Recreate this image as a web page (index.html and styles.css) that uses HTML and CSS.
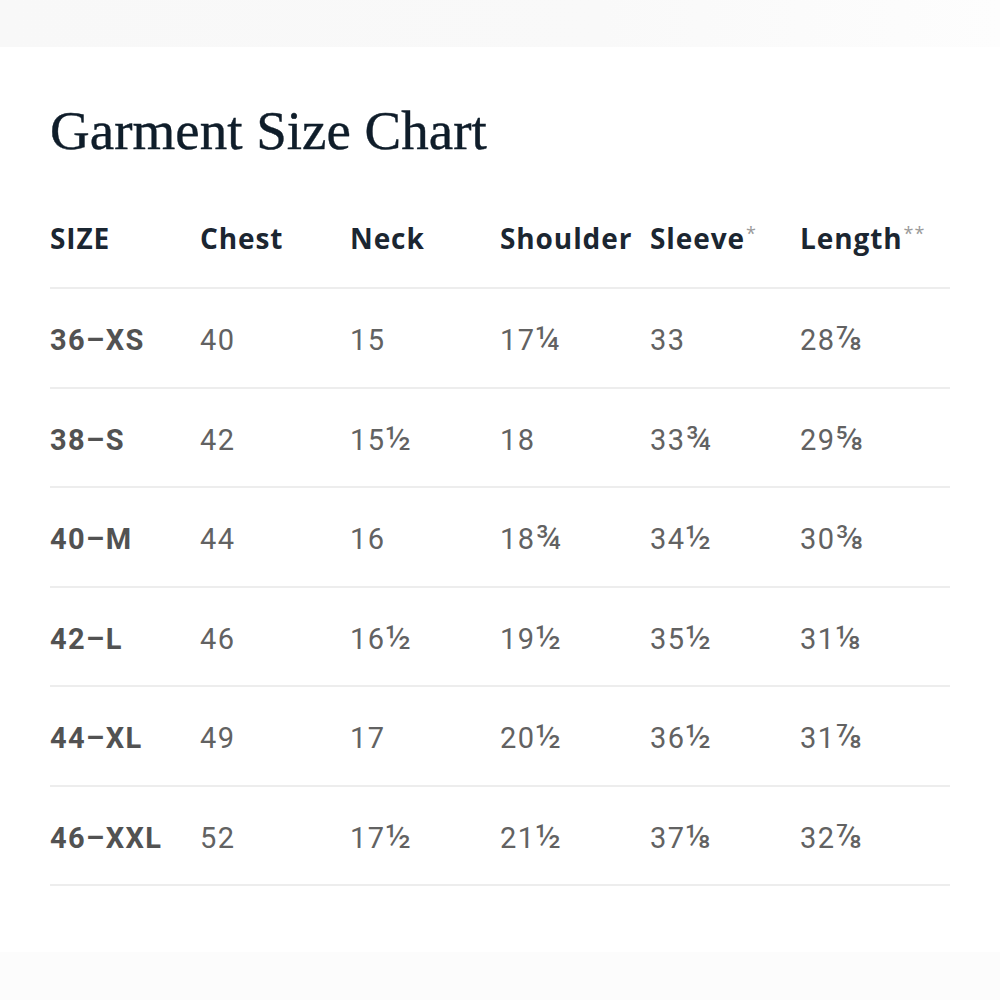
FILE: index.html
```html
<!DOCTYPE html>
<html lang="en">
<head>
<meta charset="utf-8">
<title>Garment Size Chart</title>
<link rel="stylesheet" href="styles.css">
</head>
<body>
<div class="top-band"></div>
<main class="chart">
  <h1 class="title">Garment Size Chart</h1>
  <div class="table">
    <div class="row head">
      <div class="cell">SIZE</div>
      <div class="cell">Chest</div>
      <div class="cell">Neck</div>
      <div class="cell">Shoulder</div>
      <div class="cell">Sleeve<span class="ast">*</span></div>
      <div class="cell">Length<span class="ast">**</span></div>
    </div>
    <div class="row">
      <div class="cell size">36–XS</div><div class="cell">40</div><div class="cell">15</div><div class="cell">17<span class="frac">¼</span></div><div class="cell">33</div><div class="cell">28<span class="frac">⅞</span></div>
    </div>
    <div class="row">
      <div class="cell size">38–S</div><div class="cell">42</div><div class="cell">15<span class="frac">½</span></div><div class="cell">18</div><div class="cell">33<span class="frac">¾</span></div><div class="cell">29<span class="frac">⅝</span></div>
    </div>
    <div class="row">
      <div class="cell size">40–M</div><div class="cell">44</div><div class="cell">16</div><div class="cell">18<span class="frac">¾</span></div><div class="cell">34<span class="frac">½</span></div><div class="cell">30<span class="frac">⅜</span></div>
    </div>
    <div class="row">
      <div class="cell size">42–L</div><div class="cell">46</div><div class="cell">16<span class="frac">½</span></div><div class="cell">19<span class="frac">½</span></div><div class="cell">35<span class="frac">½</span></div><div class="cell">31<span class="frac">⅛</span></div>
    </div>
    <div class="row">
      <div class="cell size">44–XL</div><div class="cell">49</div><div class="cell">17</div><div class="cell">20<span class="frac">½</span></div><div class="cell">36<span class="frac">½</span></div><div class="cell">31<span class="frac">⅞</span></div>
    </div>
    <div class="row">
      <div class="cell size">46–XXL</div><div class="cell">52</div><div class="cell">17<span class="frac">½</span></div><div class="cell">21<span class="frac">½</span></div><div class="cell">37<span class="frac">⅛</span></div><div class="cell">32<span class="frac">⅞</span></div>
    </div>
  </div>
</main>
<div class="bottom-band"></div>
</body>
</html>
```
FILE: styles.css
```css
html, body {
  margin: 0;
  padding: 0;
  background: #ffffff;
}
body {
  width: 1000px;
  height: 1000px;
  overflow: hidden;
  display: flex;
  flex-direction: column;
}
.top-band {
  height: 47px;
  background: linear-gradient(90deg, #f8f8f8 0%, #f9f9f9 60%, #fdfdfd 100%);
}
.chart {
  flex: 1;
  padding: 0 50px;
}
.title {
  margin: 56px 0 0 0;
  font-family: "Liberation Serif", "DejaVu Serif", serif;
  font-weight: 400;
  font-size: 55px;
  line-height: 55px;
  color: #0f1d2a;
  letter-spacing: 0;
  -webkit-text-stroke: 0.4px #0f1d2a;
}
.table {
  margin-top: 61px;
  display: flex;
  flex-direction: column;
}
.row {
  display: grid;
  grid-template-columns: repeat(6, 150px);
  align-items: center;
  height: 99.5px;
  box-sizing: border-box;
  padding-top: 5px;
  border-bottom: 2px solid #ededed;
  font-family: Roboto, "Liberation Sans", sans-serif;
  font-size: 29px;
  line-height: 36px;
  color: #626262;
  letter-spacing: 1.4px;
}
.row.head {
  height: 70px;
  padding-top: 0;
  align-items: start;
  font-family: "Open Sans", "Liberation Sans", sans-serif;
  font-weight: 700;
  font-size: 28px;
  line-height: 38px;
  color: #1b2631;
  letter-spacing: 0.9px;
}
.cell {
  white-space: nowrap;
}
.size {
  font-weight: 700;
  color: #525252;
  letter-spacing: 1.4px;
}
.frac {
  font-size: 1.14em;
  line-height: 0;
  letter-spacing: 0;
}
.ast {
  font-weight: 400;
  font-size: 18px;
  line-height: 0;
  color: #9a9a9a;
  vertical-align: 9px;
  letter-spacing: 1px;
  margin-left: 1px;
}
.bottom-band {
  height: 48px;
  background: #fcfcfc;
}
```
